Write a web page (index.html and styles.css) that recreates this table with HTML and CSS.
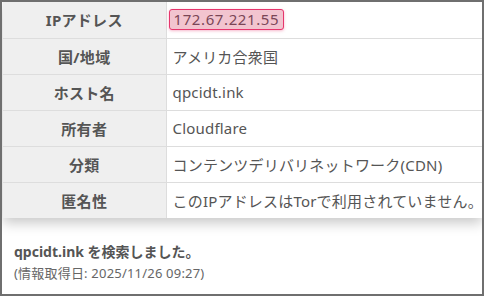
FILE: index.html
```html
<!DOCTYPE html>
<html lang="ja">
<head>
<meta charset="utf-8">
<link rel="stylesheet" href="styles.css">
</head>
<body>
<div class="frame">
  <table class="info">
    <tr><th>IPアドレス</th><td><span class="ip">172.67.221.55</span></td></tr>
    <tr><th>国/地域</th><td>アメリカ合衆国</td></tr>
    <tr><th>ホスト名</th><td>qpcidt.ink</td></tr>
    <tr><th>所有者</th><td>Cloudflare</td></tr>
    <tr><th>分類</th><td>コンテンツデリバリネットワーク(CDN)</td></tr>
    <tr><th>匿名性</th><td>このIPアドレスはTorで利用されていません。</td></tr>
  </table>
  <div class="note">
    <p class="searched">qpcidt.ink を検索しました。</p>
    <p class="date">(情報取得日: 2025/11/26 09:27)</p>
  </div>
</div>
</body>
</html>
```
FILE: styles.css
```css
html, body { margin: 0; padding: 0; background: #fff; }
body {
  font-family: "Noto Sans", "Noto Sans CJK JP", sans-serif;
  color: #555;
}
.frame {
  width: 484px;
  height: 296px;
  box-sizing: border-box;
  border: 2px solid #6f6f6f;
  padding: 0 0 0 1px;
  overflow: hidden;
}
.info {
  width: 479px;
  table-layout: fixed;
  border-collapse: collapse;
  box-shadow: 0 5px 12px rgba(0,0,0,0.22);
  font-size: 15px;
}
.info tr { height: 36px; }
.info th, .info td {
  border-bottom: 1px solid #ddd;
  padding: 0 6px;
  vertical-align: middle;
  white-space: nowrap;
}
.info tr:last-child th, .info tr:last-child td { border-bottom: none; }
.info th {
  box-sizing: border-box;
  width: 163px;
  background: #efefef;
  font-weight: bold;
  color: #555;
  border-right: 1px solid #ddd;
  text-align: center;
  letter-spacing: 0.3px;
}
.info td { background: #fff; color: #555; padding-left: 6px; letter-spacing: 0.2px; }
.ip {
  display: inline-block;
  margin-left: -4px;
  padding: 0 4px;
  line-height: 19px;
  background: #f2c4cf;
  border: 1px solid #e6356c;
  border-radius: 3px;
  box-shadow: 0 1px 3px rgba(230,53,108,0.35);
  color: #7a4656;
  letter-spacing: 0.6px;
}
.note { padding: 23px 0 0 11px; }
.note p { margin: 0; }
.searched { font-weight: bold; color: #555; line-height: 22px; font-size: 14px; }
.date { color: #666; line-height: 20px; font-size: 13px; letter-spacing: 0.2px; }
```
